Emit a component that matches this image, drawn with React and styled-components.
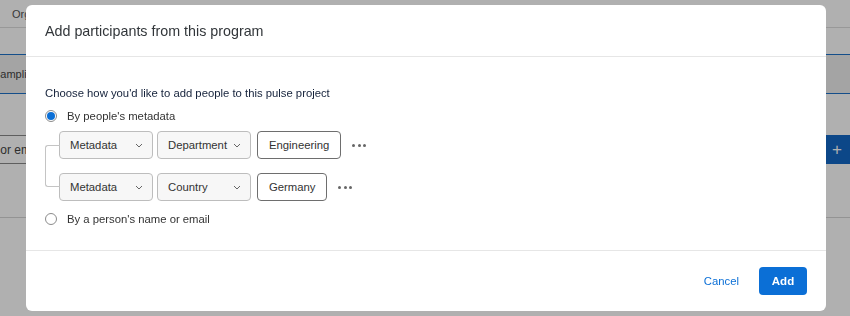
import React from "react";
import styled, { createGlobalStyle } from "styled-components";

const Global = createGlobalStyle`
  html, body { margin: 0; padding: 0; background: #fff; }
  body { font-family: "Liberation Sans", Arial, sans-serif; color: #333; }
  * { box-sizing: border-box; }
`;

/* ---------- background app ---------- */
const Page = styled.div`
  width: 850px;
  height: 316px;
  overflow: hidden;
  background: #fff;
  display: flex;
  flex-direction: column;
`;
const TopBar = styled.div`
  height: 28px;
  border-bottom: 1px solid #ddd;
  font-size: 11px;
  color: #555;
  display: flex;
  align-items: center;
  padding-left: 12px;
`;
const Spacer = styled.div`
  height: ${(p) => p.$h}px;
  flex: none;
`;
const TabBand = styled.div`
  height: 40px;
  border-top: 1px solid #1d72c8;
  border-bottom: 1px solid #1d72c8;
  background: #eeeeee;
  display: flex;
  align-items: center;
  font-size: 11px;
  color: #444;
  margin-left: -7px;
`;
const ToolRow = styled.div`
  height: 29px;
  display: flex;
  justify-content: space-between;
`;
const BgInput = styled.div`
  width: 140px;
  margin-left: -90px;
  border: 1px solid #888;
  border-left: none;
  display: flex;
  align-items: center;
  justify-content: flex-end;
  padding-right: 6px;
  font-size: 12px;
  color: #444;
  white-space: nowrap;
`;
const BgButton = styled.div`
  width: 24px;
  background: #1268c6;
  color: #fff;
  font-size: 17px;
  font-weight: 300;
  display: flex;
  align-items: center;
  padding-left: 6px;
`;
const BgRule = styled.div`
  border-top: 1px solid #d6d6d6;
`;

/* ---------- modal ---------- */
const Backdrop = styled.div`
  position: fixed;
  inset: 0;
  background: rgba(0, 0, 0, 0.31);
`;
const Modal = styled.div`
  position: fixed;
  left: 26px;
  top: 5px;
  width: 800px;
  height: 306px;
  background: #fff;
  border-radius: 6px;
  display: flex;
  flex-direction: column;
  overflow: hidden;
`;
const Header = styled.div`
  height: 52px;
  flex: none;
  border-bottom: 1px solid #e6e6e6;
  display: flex;
  align-items: center;
  padding: 0 19px;
`;
const Title = styled.h2`
  margin: 0;
  font-size: 14.3px;
  font-weight: 400;
  color: #32363a;
`;
const Body = styled.div`
  flex: 1;
  padding: 28px 19px 0;
  border-bottom: 1px solid #e6e6e6;
  display: flex;
  flex-direction: column;
`;
const Prompt = styled.div`
  font-size: 11.3px;
  line-height: 16px;
  color: #14213a;
`;
const RadioRow = styled.label`
  display: flex;
  align-items: center;
  gap: 10px;
  height: 16px;
  margin-top: ${(p) => p.$mt}px;
  font-size: 11.3px;
  color: #333;
`;
const RadioDot = styled.span`
  width: 12px;
  height: 12px;
  border-radius: 50%;
  border: 1px solid #8c8c8c;
  background: #fff;
  display: flex;
  align-items: center;
  justify-content: center;
  &::after {
    content: "";
    width: 8px;
    height: 8px;
    border-radius: 50%;
    background: ${(p) => (p.$on ? "#0b6fd6" : "transparent")};
  }
`;
const Group = styled.div`
  position: relative;
  margin-top: 7px;
  padding-left: 14px;
  display: flex;
  flex-direction: column;
  gap: 14px;
  &::before {
    content: "";
    position: absolute;
    left: 0;
    top: 14px;
    bottom: 14px;
    width: 14px;
    border: 1px solid #c4c4c4;
    border-right: none;
    border-radius: 3px 0 0 3px;
  }
`;
const CondRow = styled.div`
  display: flex;
  align-items: center;
  height: 28px;
`;
const Select = styled.div`
  width: 94px;
  height: 28px;
  margin-right: ${(p) => p.$mr}px;
  border: 1px solid #bdbdbd;
  border-radius: 4px;
  background: #f7f7f7;
  display: flex;
  align-items: center;
  justify-content: space-between;
  padding: 0 9px 0 10px;
  font-size: 11.3px;
  color: #333;
`;
const Value = styled.div`
  height: 28px;
  padding: 0 11px;
  border: 1px solid #6e6e6e;
  border-radius: 4px;
  background: #fff;
  display: flex;
  align-items: center;
  font-size: 11.3px;
  color: #333;
`;
const More = styled.button`
  border: none;
  background: none;
  padding: 0;
  margin-left: 11px;
  width: 14px;
  height: 14px;
  display: flex;
  align-items: center;
  justify-content: space-between;
  & > span {
    width: 3px;
    height: 3px;
    border-radius: 50%;
    background: #666;
  }
`;
const Footer = styled.div`
  height: 60px;
  flex: none;
  display: flex;
  align-items: center;
  justify-content: flex-end;
  gap: 20px;
  padding-right: 19px;
`;
const LinkButton = styled.button`
  border: none;
  background: none;
  font-family: inherit;
  font-size: 11.3px;
  color: #0b6fd6;
  padding: 0;
`;
const PrimaryButton = styled.button`
  width: 48px;
  height: 28px;
  border: none;
  border-radius: 4px;
  background: #0b6fd6;
  color: #fff;
  font-family: inherit;
  font-size: 11.5px;
  font-weight: 700;
`;

const Chevron = () => (
  <svg width="8" height="5" viewBox="0 0 8 5" fill="none">
    <path d="M1 1l3 3 3-3" stroke="#666" strokeWidth="1" />
  </svg>
);

const Dots = () => (
  <More aria-label="more">
    <span />
    <span />
    <span />
  </More>
);

const rows = [
  { a: "Metadata", b: "Department", v: "Engineering" },
  { a: "Metadata", b: "Country", v: "Germany" },
];

export default function App() {
  return (
    <>
      <Global />
      <Page>
        <TopBar>Org</TopBar>
        <Spacer $h={26} />
        <TabBand>Sampling</TabBand>
        <Spacer $h={41} />
        <ToolRow>
          <BgInput>Name or email</BgInput>
          <BgButton>+</BgButton>
        </ToolRow>
        <Spacer $h={53} />
        <BgRule />
      </Page>
      <Backdrop />
      <Modal>
        <Header>
          <Title>Add participants from this program</Title>
        </Header>
        <Body>
          <Prompt>Choose how you'd like to add people to this pulse project</Prompt>
          <RadioRow $mt={7}>
            <RadioDot $on />
            By people's metadata
          </RadioRow>
          <Group>
            {rows.map((r) => (
              <CondRow key={r.b}>
                <Select $mr={4}>
                  {r.a}
                  <Chevron />
                </Select>
                <Select $mr={6}>
                  {r.b}
                  <Chevron />
                </Select>
                <Value>{r.v}</Value>
                <Dots />
              </CondRow>
            ))}
          </Group>
          <RadioRow $mt={10}>
            <RadioDot />
            By a person's name or email
          </RadioRow>
        </Body>
        <Footer>
          <LinkButton>Cancel</LinkButton>
          <PrimaryButton>Add</PrimaryButton>
        </Footer>
      </Modal>
    </>
  );
}
